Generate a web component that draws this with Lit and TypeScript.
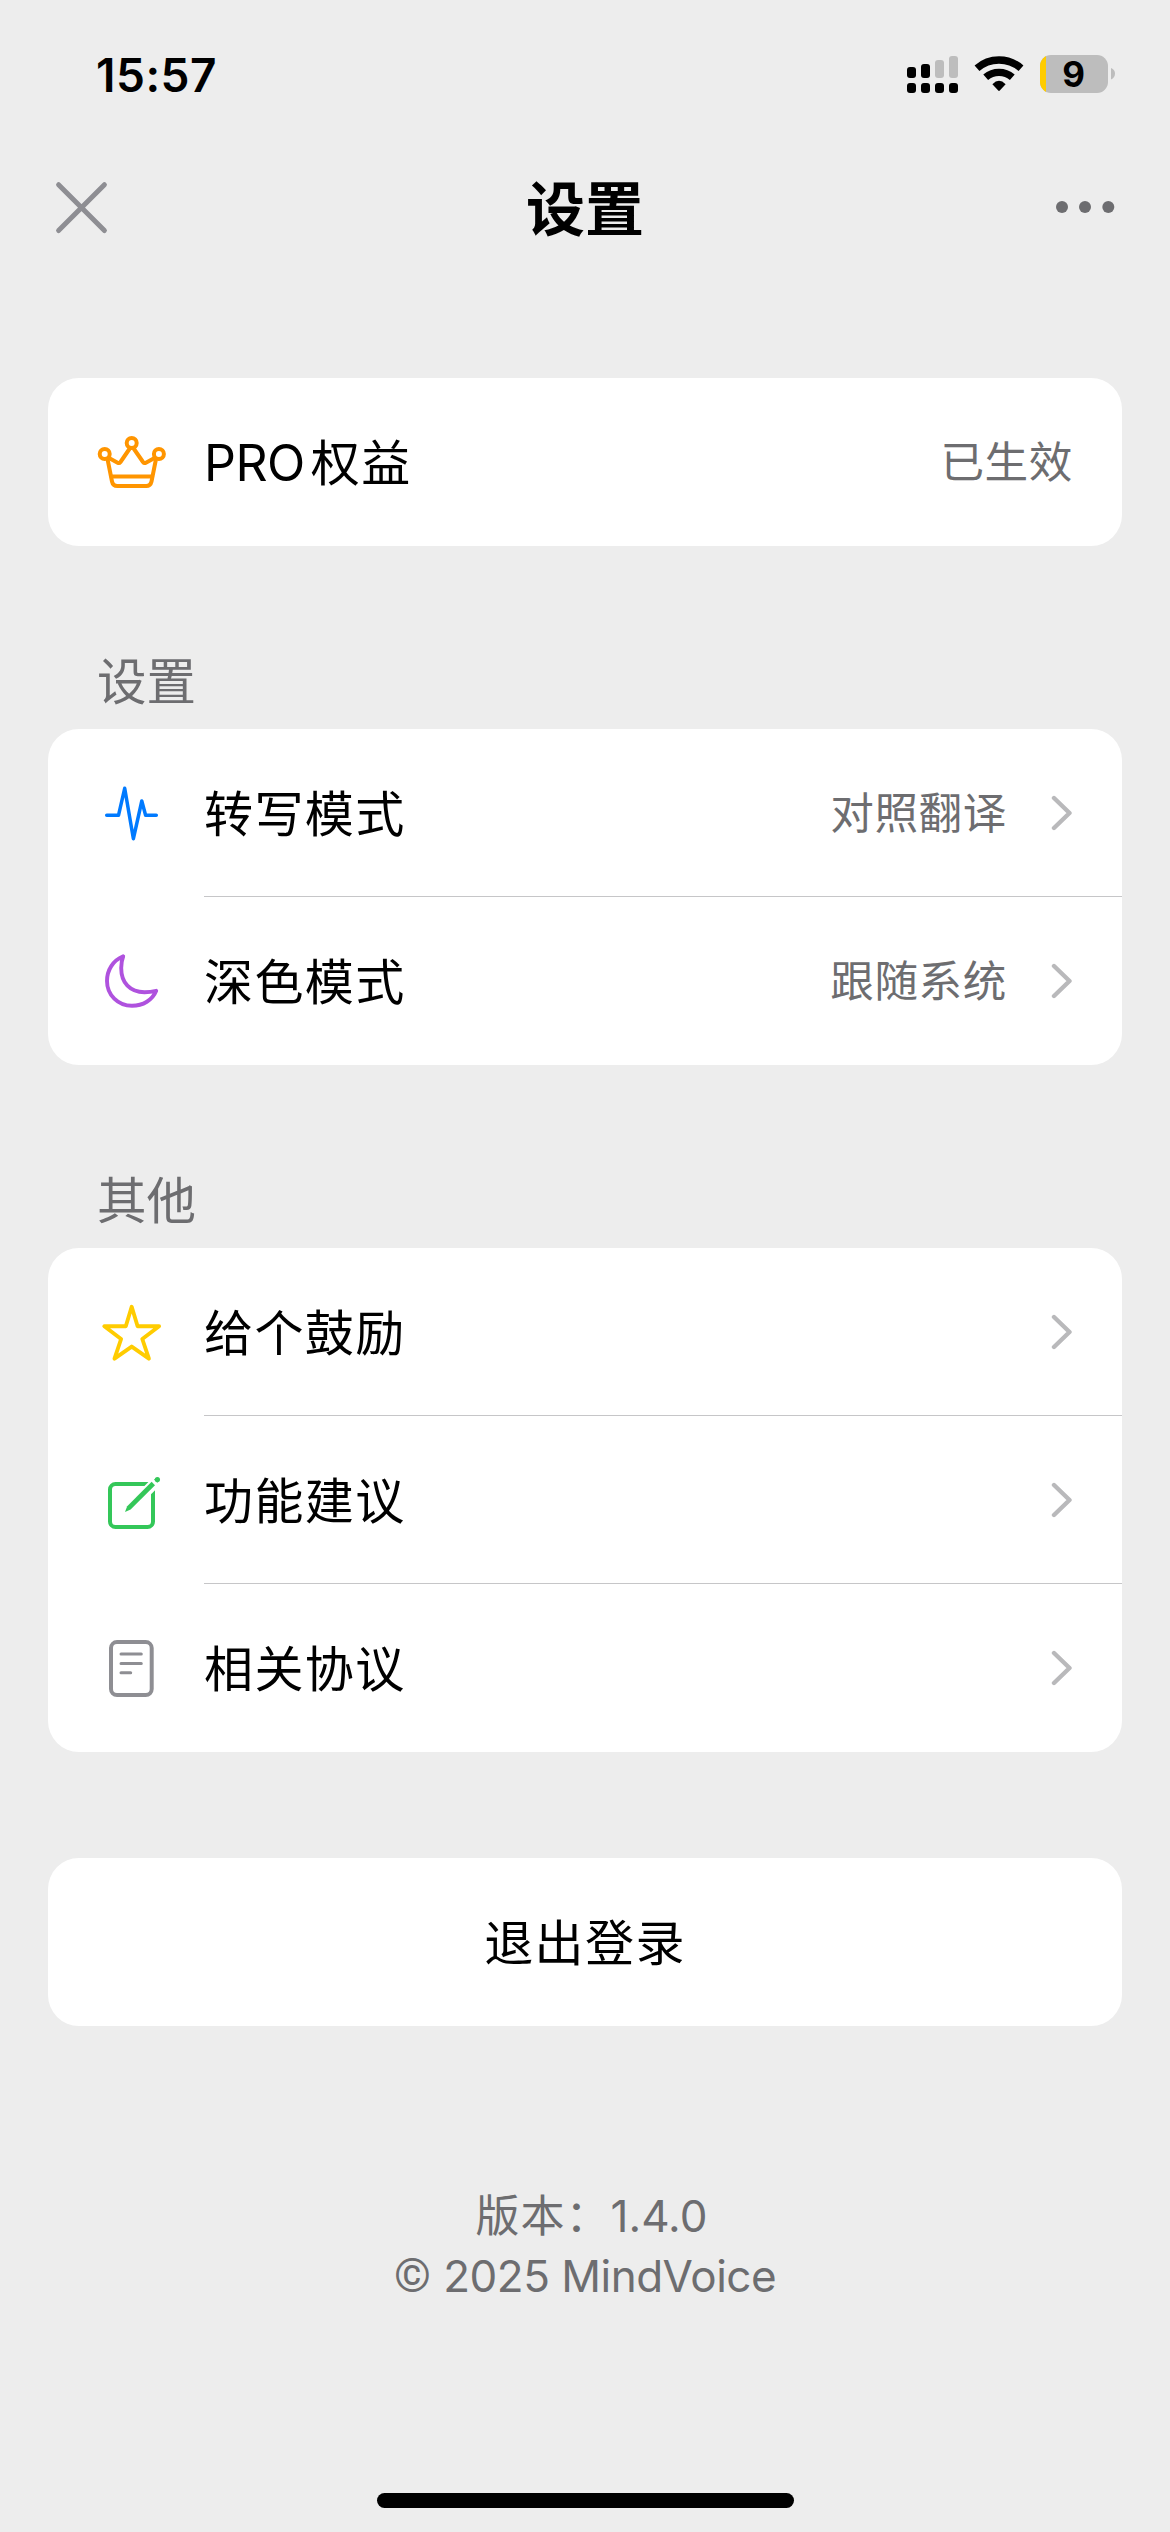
import { LitElement, html, css, svg, nothing } from "lit";
import { customElement, property } from "lit/decorators.js";

const icons: Record<string, unknown> = {
  crown: svg`<g stroke="#ff9500" stroke-width="4">
    <circle cx="41.7" cy="23" r="5"/><circle cx="14.7" cy="34" r="5"/><circle cx="68.9" cy="34" r="5"/>
    <path d="M17.7 40L22 61.5Q23 66 27.3 66H56.2Q60.5 66 61.5 61.5L65.8 40"/>
    <path d="M21.5 56.6H62"/>
    <path d="M19 38L27.6 42.7Q29.3 43.6 30.5 42L39.4 29M44 29L53 42Q54.2 43.6 55.9 42.7L64.5 38"/></g>`,
  pulse: svg`<path stroke="#007aff" stroke-width="3.5" d="M16.7 44.3H28.5L34.7 17.3L43.4 67.7L51.8 30L55.6 44.3H66.3"/>`,
  moon: svg`<path stroke="#af52de" stroke-width="3.9" d="M33.2 17.3C23 21.5 17 31 17 42C17 56 28 66.8 42 66.8C53 66.8 62.5 61 66.2 51.8C62 52.8 58.5 53.2 54.5 53.2C40 53.2 31.2 44 31.2 29C31.2 24.5 32 20.5 33.2 17.3Z"/>`,
  star: svg`<path stroke="#ffcc00" stroke-width="3.9" d="M41.7 16.8L47.6 36.2H69.1L52.3 49L58.9 68.7L41.7 56.6L24.5 68.7L31.1 49L14.3 36.2H35.8Z"/>`,
  edit: svg`<rect x="20" y="26" width="43" height="43" rx="5.5" stroke="#34c759" stroke-width="4"/>
    <path stroke="#fff" stroke-width="10.5" stroke-linecap="butt" d="M50 39.7L71 19"/>
    <path fill="#34c759" d="M35 54L37.2 48.2L61.6 23.8L65 27.2L40.6 51.6Z"/>
    <path stroke="#34c759" stroke-width="4.6" stroke-linecap="butt" d="M65.6 23.2L66.2 22.6"/>
    <circle cx="67.4" cy="21.6" r="2.6" fill="#34c759"/>`,
  doc: svg`<g stroke="#8e8e93"><rect x="21" y="16.1" width="40.7" height="53" rx="6" stroke-width="4"/>
    <path stroke-width="3" d="M31 28H51.3M31 37.4H51.3M31 46.7H40.7"/></g>`,
};

const fonts = css`"Inter", "Noto Sans CJK SC", sans-serif`;

@customElement("settings-row")
export class SettingsRow extends LitElement {
  @property() icon = "";
  @property() latin = "";
  @property() label = "";
  @property() value = "";
  @property({ type: Boolean }) chevron = false;
  @property({ type: Boolean }) divided = false;

  static styles = css`
    :host { display: block; }
    .row { display: flex; height: 168px; padding-left: 42px; font-family: ${fonts}; }
    .icon { width: 84px; height: 84px; margin: 42px 30px 42px 0; flex: none; }
    .body { flex: 1; display: flex; align-items: center; padding-right: 49px; box-sizing: border-box; }
    .divided .body { box-shadow: 0 -1px 0 #c6c6c8; }
    .label { flex: 1; padding-top: 3px; font-size: 49px; letter-spacing: 1.4px; color: #000; line-height: 72px; }
    .latin { font-size: 50px; letter-spacing: -0.5px; margin: 0 6px 0 0; }
    .value { padding-top: 2px; font-size: 43.6px; letter-spacing: 0.6px; color: #6d6d70; line-height: 64px; }
    .chev { width: 22px; height: 38px; margin-left: 44px; }
  `;

  render() {
    return html`<div class="row ${this.divided ? "divided" : ""}">
      <svg class="icon" viewBox="0 0 84 84" fill="none" stroke-linecap="round" stroke-linejoin="round">${icons[this.icon]}</svg>
      <div class="body">
        <span class="label">${this.latin ? html`<span class="latin">${this.latin}</span>` : nothing}${this.label}</span>
        ${this.value ? html`<span class="value">${this.value}</span>` : nothing}
        ${this.chevron
          ? html`<svg class="chev" viewBox="0 0 22 38" fill="none" stroke="#b9b9bb" stroke-width="4.4" stroke-linecap="round" stroke-linejoin="round"><path d="M3 4L18.5 19L3 34"/></svg>`
          : nothing}
      </div>
    </div>`;
  }
}

@customElement("app-root")
export class AppRoot extends LitElement {
  static styles = css`
    :host { display: block; }
    .page { width: 1170px; height: 2532px; background: #ededed; display: flex; flex-direction: column; box-sizing: border-box; font-family: ${fonts}; overflow: hidden; }
    .status { height: 150px; flex: none; display: flex; justify-content: space-between; box-sizing: border-box; padding: 45px 54px 0 96px; }
    .time { font-size: 46px; line-height: 60px; font-weight: 600; letter-spacing: 0.5px; }
    .tray { width: 210px; height: 60px; }
    .nine { font-size: 35px; font-weight: 700; text-anchor: middle; }
    .nav { height: 228px; flex: none; display: grid; grid-template-columns: 200px 1fr 200px; box-sizing: border-box; padding: 17px 53px 0 53px; }
    .close { width: 58px; height: 80px; }
    .title { text-align: center; font-size: 59px; line-height: 85px; font-weight: 700; }
    .more { width: 66px; height: 80px; justify-self: end; }
    .card { margin: 0 48px; flex: none; background: #fff; border-radius: 31px; overflow: hidden; }
    .head { flex: none; height: 183px; box-sizing: border-box; padding: 100px 0 0 97px; font-size: 49.5px; line-height: 72px; color: #6d6d70; }
    .logout { margin-top: 106px; height: 168px; line-height: 171px; text-align: center; font-size: 49px; letter-spacing: 1.4px; }
    .foot { margin-top: 160px; text-align: center; color: #6d6d70; font-size: 44px; line-height: 60px; flex: 1; }
    .version { padding-left: 13px; height: 60px; }
    .cjk { letter-spacing: 1px; }
    .copy { letter-spacing: -0.5px; height: 60px; }
    .mark { font-family: "Roboto", sans-serif; font-size: 47px; line-height: 1; margin-right: 1px; }
    .home { flex: none; width: 417px; height: 15px; border-radius: 8px; background: #000; margin: 0 auto 24px; }
  `;

  render() {
    return html`<div class="page">
      <div class="status">
        <div class="time">15:57</div>
        <svg class="tray" viewBox="906 45 210 60">
          <rect x="907" y="67" width="9" height="11" rx="3"/><rect x="921" y="64" width="9" height="14" rx="3"/>
          <rect x="935" y="60" width="9" height="18" rx="3" fill="#bdbdbd"/><rect x="949" y="56" width="9" height="22" rx="3" fill="#bdbdbd"/>
          ${[907, 921, 935, 949].map((x) => svg`<rect x=${x} y="83" width="9" height="10" rx="3"/>`)}
          <g fill="none" stroke="#000" stroke-width="7.4"><path d="M977 68.2A33.5 33.5 0 0 1 1021 68.2"/><path d="M985.7 77.3A20.5 20.5 0 0 1 1012.3 77.3"/></g>
          <path d="M992.4 84.3Q999 77.4 1005.6 84.3L999.8 90.6Q999 91.4 998.2 90.6Z"/>
          <clipPath id="cell"><rect x="1040" y="55" width="68" height="38" rx="11"/></clipPath>
          <g clip-path="url(#cell)"><rect x="1040" y="55" width="68" height="38" fill="#bdbdbd"/><rect x="1040" y="55" width="6" height="38" fill="#ffcc00"/></g>
          <path fill="#bdbdbd" d="M1111 68Q1115 69.5 1115 73.5T1111 79.5Z"/>
          <text class="nine" x="1073.7" y="87">9</text>
        </svg>
      </div>
      <div class="nav">
        <svg class="close" viewBox="53 167 58 80" fill="none" stroke="#8e8e93" stroke-width="5" stroke-linecap="round"><path d="M58.6 184.7L104.4 230.6M104.4 184.7L58.6 230.6"/></svg>
        <div class="title">设置</div>
        <svg class="more" viewBox="1051 167 66 80" fill="#6d6d70"><circle cx="1062" cy="207" r="6"/><circle cx="1085" cy="207" r="6"/><circle cx="1108.3" cy="207" r="6"/></svg>
      </div>
      <div class="card"><settings-row icon="crown" latin="PRO" label="权益" value="已生效"></settings-row></div>
      <div class="head">设置</div>
      <div class="card">
        <settings-row icon="pulse" label="转写模式" value="对照翻译" chevron></settings-row>
        <settings-row icon="moon" label="深色模式" value="跟随系统" chevron divided></settings-row>
      </div>
      <div class="head">其他</div>
      <div class="card">
        <settings-row icon="star" label="给个鼓励" chevron></settings-row>
        <settings-row icon="edit" label="功能建议" chevron divided></settings-row>
        <settings-row icon="doc" label="相关协议" chevron divided></settings-row>
      </div>
      <div class="card logout">退出登录</div>
      <div class="foot">
        <div class="version"><span class="cjk">版本：</span>1.4.0</div>
        <div class="copy"><span class="mark">©</span> 2025 MindVoice</div>
      </div>
      <div class="home"></div>
    </div>`;
  }
}
